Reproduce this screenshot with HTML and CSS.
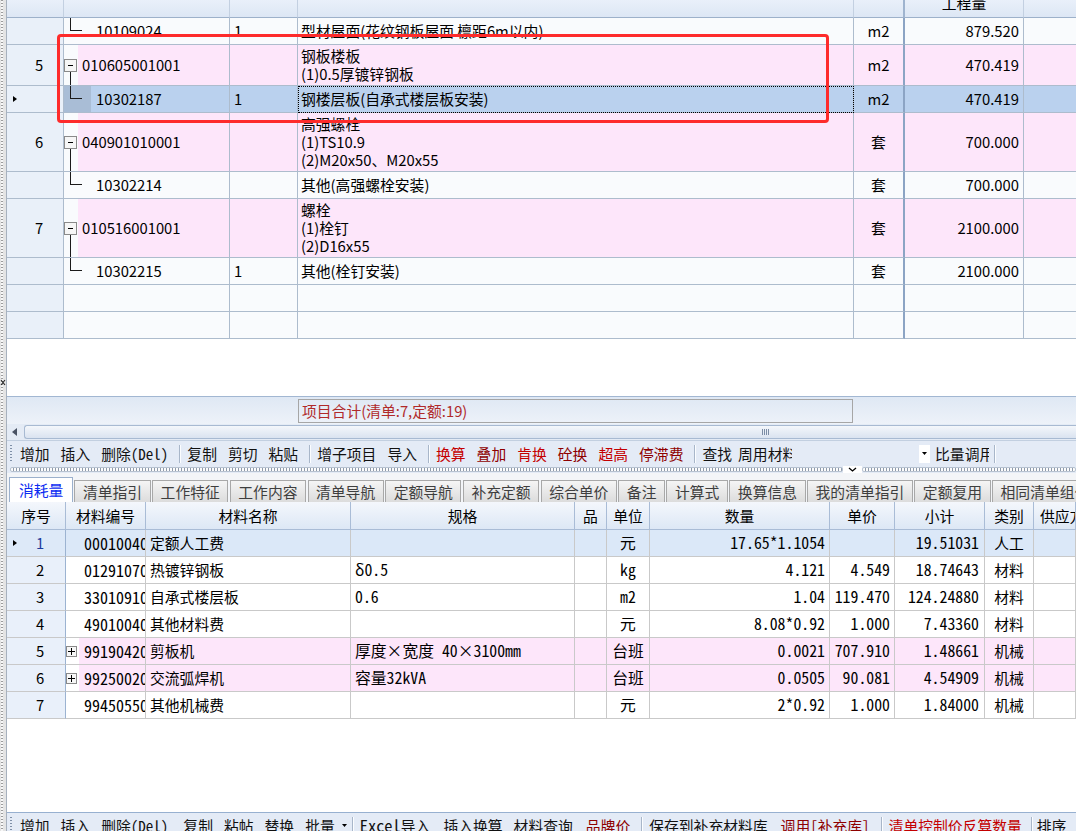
FILE: index.html
```html
<!DOCTYPE html>
<html lang="zh-CN">
<head>
<meta charset="utf-8">
<title>清单定额</title>
<link rel="stylesheet" href="styles.css">
</head>
<body>
<div class="app">
  <div class="strip">
    <svg class="strip-mark" width="6" height="7" viewBox="0 0 6 7"><path d="M1 1L5 6M5 1L1 6" stroke="#222" stroke-width="1.1"/></svg>
  </div>
  <div class="main">
    <section class="top">
      <div class="tr head">
        <div class="c"></div><div class="c"></div><div class="c"></div><div class="c"></div><div class="c cu"></div>
        <div class="c"><span class="head-txt">工程量</span></div><div class="c"></div>
      </div>

      <div class="tr">
        <div class="c rn"><span class="ind"></span><span class="num"></span></div>
        <div class="c code"><span class="tree"><i class="ell"></i></span><span class="ct">10109024</span></div>
        <div class="c q1">1</div>
        <div class="c nm"><span>型材屋面(花纹钢板屋面 檩距6m以内)</span></div>
        <div class="c un cu">m2</div>
        <div class="c qt">879.520</div>
        <div class="c"></div>
      </div>

      <div class="tr h41 pink">
        <div class="c rn"><span class="ind"></span><span class="num">5</span></div>
        <div class="c code parent"><span class="gut"><i class="sp"></i><svg width="13" height="13" viewBox="0 0 13 13"><rect x="0.5" y="0.5" width="12" height="12" fill="#f6f6f6" stroke="#8a8a8a"/><path d="M4 6.5H9" stroke="#000"/></svg><i class="dn"></i></span><span class="ct">010605001001</span></div>
        <div class="c q1"></div>
        <div class="c nm"><span>钢板楼板</span><span>(1)0.5厚镀锌钢板</span></div>
        <div class="c un cu">m2</div>
        <div class="c qt">470.419</div>
        <div class="c"></div>
      </div>

      <div class="tr sel">
        <div class="c rn"><span class="ind"><i class="tri"></i></span><span class="num"></span></div>
        <div class="c code"><span class="tree"><i class="ell"></i></span><span class="ct">10302187</span></div>
        <div class="c q1">1</div>
        <div class="c nm focus"><span>钢楼层板(自承式楼层板安装)</span></div>
        <div class="c un cu">m2</div>
        <div class="c qt">470.419</div>
        <div class="c"></div>
      </div>

      <div class="tr h59 pink">
        <div class="c rn"><span class="ind"></span><span class="num">6</span></div>
        <div class="c code parent"><span class="gut"><i class="sp"></i><svg width="13" height="13" viewBox="0 0 13 13"><rect x="0.5" y="0.5" width="12" height="12" fill="#f6f6f6" stroke="#8a8a8a"/><path d="M4 6.5H9" stroke="#000"/></svg><i class="dn"></i></span><span class="ct">040901010001</span></div>
        <div class="c q1"></div>
        <div class="c nm"><span>高强螺栓</span><span>(1)TS10.9</span><span>(2)M20x50、M20x55</span></div>
        <div class="c un cu">套</div>
        <div class="c qt">700.000</div>
        <div class="c"></div>
      </div>

      <div class="tr">
        <div class="c rn"><span class="ind"></span><span class="num"></span></div>
        <div class="c code"><span class="tree"><i class="ell"></i></span><span class="ct">10302214</span></div>
        <div class="c q1"></div>
        <div class="c nm"><span>其他(高强螺栓安装)</span></div>
        <div class="c un cu">套</div>
        <div class="c qt">700.000</div>
        <div class="c"></div>
      </div>

      <div class="tr h59 pink">
        <div class="c rn"><span class="ind"></span><span class="num">7</span></div>
        <div class="c code parent"><span class="gut"><i class="sp"></i><svg width="13" height="13" viewBox="0 0 13 13"><rect x="0.5" y="0.5" width="12" height="12" fill="#f6f6f6" stroke="#8a8a8a"/><path d="M4 6.5H9" stroke="#000"/></svg><i class="dn"></i></span><span class="ct">010516001001</span></div>
        <div class="c q1"></div>
        <div class="c nm"><span>螺栓</span><span>(1)栓钉</span><span>(2)D16x55</span></div>
        <div class="c un cu">套</div>
        <div class="c qt">2100.000</div>
        <div class="c"></div>
      </div>

      <div class="tr">
        <div class="c rn"><span class="ind"></span><span class="num"></span></div>
        <div class="c code"><span class="tree"><i class="ell"></i></span><span class="ct">10302215</span></div>
        <div class="c q1">1</div>
        <div class="c nm"><span>其他(栓钉安装)</span></div>
        <div class="c un cu">套</div>
        <div class="c qt">2100.000</div>
        <div class="c"></div>
      </div>

      <div class="tr">
        <div class="c rn"></div><div class="c"></div><div class="c"></div><div class="c"></div><div class="c cu"></div><div class="c"></div><div class="c"></div>
      </div>
      <div class="tr">
        <div class="c rn"></div><div class="c"></div><div class="c"></div><div class="c"></div><div class="c cu"></div><div class="c"></div><div class="c"></div>
      </div>
    </section>

    <div class="summary"><div class="sum-box">项目合计(清单:7,定额:19)</div></div>

    <div class="hscroll">
      <span class="harr"><svg width="5" height="8" viewBox="0 0 5 8"><path d="M5 0L0 4L5 8Z" fill="#4a5364"/></svg></span>
      <span class="thumb"><i class="grip-v"></i></span>
    </div>

    <div class="toolbar tb-top">
      <span class="grip"></span>
      <span class="it">增加</span>
      <span class="it">插入</span>
      <span class="it">删除<span class="mono">(Del)</span></span>
      <span class="sep"></span>
      <span class="it">复制</span>
      <span class="it">剪切</span>
      <span class="it">粘贴</span>
      <span class="sep"></span>
      <span class="it">增子项目</span>
      <span class="it">导入</span>
      <span class="sep"></span>
      <span class="it red">换算</span>
      <span class="it dred">叠加</span>
      <span class="it red">肯换</span>
      <span class="it dred">砼换</span>
      <span class="it red">超高</span>
      <span class="it dred">停滞费</span>
      <span class="sep"></span>
      <span class="it tight">查找</span>
      <span class="clip c1">周用材料</span>
      <span class="dd"><svg width="5" height="3" viewBox="0 0 5 3"><path d="M0 0H5L2.5 3Z" fill="#000"/></svg></span>
      <span class="clip c2">比量调用</span>
      <span class="sep"></span>
    </div>

    <div class="splitter">
      <span class="dots l"></span>
      <span class="chev"><svg width="9" height="5" viewBox="0 0 9 5"><path d="M1 1L4.5 4L8 1" fill="none" stroke="#000" stroke-width="1.3"/></svg></span>
      <span class="dots r"></span>
    </div>

    <div class="tabs">
      <span class="tab on">消耗量</span>
      <span class="tab">清单指引</span>
      <span class="tab">工作特征</span>
      <span class="tab">工作内容</span>
      <span class="tab">清单导航</span>
      <span class="tab">定额导航</span>
      <span class="tab">补充定额</span>
      <span class="tab">综合单价</span>
      <span class="tab">备注</span>
      <span class="tab">计算式</span>
      <span class="tab">换算信息</span>
      <span class="tab">我的清单指引</span>
      <span class="tab">定额复用</span>
      <span class="tab">相同清单组价</span>
    </div>

    <section class="bottom">
      <div class="br head">
        <div class="c">序号</div><div class="c">材料编号</div><div class="c">材料名称</div><div class="c">规格</div><div class="c">品</div><div class="c">单位</div><div class="c">数量</div><div class="c">单价</div><div class="c">小计</div><div class="c">类别</div><div class="c sup">供应方</div>
      </div>

      <div class="br cur">
        <div class="c rn"><span class="ind"><i class="tri"></i></span><span class="num">1</span></div>
        <div class="c code2"><span class="g2"></span><span class="ct2">00010040</span></div>
        <div class="c nm2">定额人工费</div>
        <div class="c gg m"></div>
        <div class="c"></div>
        <div class="c ctr m">元</div>
        <div class="c rt m">17.65*1.1054</div>
        <div class="c rt m"></div>
        <div class="c rt rt5 m">19.51031</div>
        <div class="c ctr">人工</div>
        <div class="c"></div>
      </div>

      <div class="br">
        <div class="c rn"><span class="ind"></span><span class="num">2</span></div>
        <div class="c code2"><span class="g2"></span><span class="ct2">01291070</span></div>
        <div class="c nm2">热镀锌钢板</div>
        <div class="c gg m">δ0.5</div>
        <div class="c"></div>
        <div class="c ctr m">kg</div>
        <div class="c rt m">4.121</div>
        <div class="c rt m">4.549</div>
        <div class="c rt rt5 m">18.74643</div>
        <div class="c ctr">材料</div>
        <div class="c"></div>
      </div>

      <div class="br">
        <div class="c rn"><span class="ind"></span><span class="num">3</span></div>
        <div class="c code2"><span class="g2"></span><span class="ct2">33010910</span></div>
        <div class="c nm2">自承式楼层板</div>
        <div class="c gg m">0.6</div>
        <div class="c"></div>
        <div class="c ctr m">m2</div>
        <div class="c rt m">1.04</div>
        <div class="c rt m">119.470</div>
        <div class="c rt rt5 m">124.24880</div>
        <div class="c ctr">材料</div>
        <div class="c"></div>
      </div>

      <div class="br">
        <div class="c rn"><span class="ind"></span><span class="num">4</span></div>
        <div class="c code2"><span class="g2"></span><span class="ct2">49010040</span></div>
        <div class="c nm2">其他材料费</div>
        <div class="c gg m"></div>
        <div class="c"></div>
        <div class="c ctr m">元</div>
        <div class="c rt m">8.08*0.92</div>
        <div class="c rt m">1.000</div>
        <div class="c rt rt5 m">7.43360</div>
        <div class="c ctr">材料</div>
        <div class="c"></div>
      </div>

      <div class="br pink">
        <div class="c rn"><span class="ind"></span><span class="num">5</span></div>
        <div class="c code2"><span class="g2"><svg width="11" height="11" viewBox="0 0 11 11"><rect x="0.5" y="0.5" width="10" height="10" fill="#f7f7f7" stroke="#8a8a8a"/><path d="M2 5.5H9M5.5 2V9" stroke="#000"/></svg></span><span class="ct2">99190420</span></div>
        <div class="c nm2">剪板机</div>
        <div class="c gg m">厚度×宽度 40×3100mm</div>
        <div class="c"></div>
        <div class="c ctr m">台班</div>
        <div class="c rt m">0.0021</div>
        <div class="c rt m">707.910</div>
        <div class="c rt rt5 m">1.48661</div>
        <div class="c ctr">机械</div>
        <div class="c"></div>
      </div>

      <div class="br pink">
        <div class="c rn"><span class="ind"></span><span class="num">6</span></div>
        <div class="c code2"><span class="g2"><svg width="11" height="11" viewBox="0 0 11 11"><rect x="0.5" y="0.5" width="10" height="10" fill="#f7f7f7" stroke="#8a8a8a"/><path d="M2 5.5H9M5.5 2V9" stroke="#000"/></svg></span><span class="ct2">99250020</span></div>
        <div class="c nm2">交流弧焊机</div>
        <div class="c gg m">容量32kVA</div>
        <div class="c"></div>
        <div class="c ctr m">台班</div>
        <div class="c rt m">0.0505</div>
        <div class="c rt m">90.081</div>
        <div class="c rt rt5 m">4.54909</div>
        <div class="c ctr">机械</div>
        <div class="c"></div>
      </div>

      <div class="br">
        <div class="c rn"><span class="ind"></span><span class="num">7</span></div>
        <div class="c code2"><span class="g2"></span><span class="ct2">99450550</span></div>
        <div class="c nm2">其他机械费</div>
        <div class="c gg m"></div>
        <div class="c"></div>
        <div class="c ctr m">元</div>
        <div class="c rt m">2*0.92</div>
        <div class="c rt m">1.000</div>
        <div class="c rt rt5 m">1.84000</div>
        <div class="c ctr">机械</div>
        <div class="c"></div>
      </div>
    </section>

    <div class="toolbar tb-bot">
      <span class="grip"></span>
      <span class="it">增加</span>
      <span class="it">插入</span>
      <span class="it g15">删除<span class="mono">(Del)</span></span>
      <span class="it">复制</span>
      <span class="it">粘帖</span>
      <span class="it">替换</span>
      <span class="it g7">批量</span>
      <span class="ddt"><svg width="5" height="3" viewBox="0 0 5 3"><path d="M0 0H5L2.5 3Z" fill="#000"/></svg></span>
      <span class="sep"></span>
      <span class="it g13"><span class="mono wide">Excel</span>导入</span>
      <span class="it">插入换算</span>
      <span class="it g13">材料查询</span>
      <span class="it dred">品牌价</span>
      <span class="sep"></span>
      <span class="it g13">保存到补充材料库</span>
      <span class="it dred">调用<span class="mono">[</span>补充库<span class="mono">]</span></span>
      <span class="sep"></span>
      <span class="it red g9">清单控制价反算数量</span>
      <span class="sep s5"></span>
      <span class="it">排序</span>
    </div>
  </div>
  <div class="annot"></div>
</div>
</body>
</html>
```

FILE: styles.css
```css
* { box-sizing: border-box; }
html, body { margin: 0; padding: 0; }
body {
  width: 1076px;
  height: 831px;
  overflow: hidden;
  background: #fff;
  font-family: "Noto Sans CJK SC", "Noto Sans", sans-serif;
  font-size: 14.8px;
  line-height: 18px;
  color: #000;
}
i { font-style: normal; }
.mono { font-family: "Noto Sans Mono CJK SC", "DejaVu Sans Mono", monospace; font-size: 15px; }
.mono.wide { font-size: 16.4px; }
.m { font-family: "Noto Sans Mono CJK SC", "DejaVu Sans Mono", monospace; font-size: 15.8px; }

.app { position: relative; display: flex; width: 1076px; height: 831px; overflow: hidden; }

.strip {
  flex: none;
  width: 7px;
  height: 831px;
  border-right: 1px solid #a7b1be;
  background-color: #e4e4e4;
  background-image: repeating-linear-gradient(180deg, #9c9c9c 0 1px, #f7f7f7 1px 3px);
  background-size: 2px 100%;
  background-repeat: no-repeat;
  background-position: 1px 0;
  padding-top: 379px;
}
.strip-mark { display: block; }

.main { flex: 1; min-width: 0; height: 831px; display: flex; flex-direction: column; overflow: hidden; }
.main > * { flex: none; }

/* ---------- top grid ---------- */
.top { height: 396px; background: #fff; overflow: hidden; }
.tr {
  display: grid;
  grid-template-columns: 57px 166px 68px 556px 51px 119px 1fr;
  height: 27px;
  background: #f9fbfd;
}
.tr > .c {
  display: flex;
  align-items: center;
  min-width: 0;
  overflow: hidden;
  white-space: nowrap;
  border-right: 1px solid #adbccd;
  border-bottom: 1px solid #adbccd;
}
.tr > .c:last-child { border-right: 0; }
.tr > .cu { border-right: 2px solid #8ca4c4; }
.tr.head { height: 18px; background: linear-gradient(#e9f0fa, #dce6f4); }
.tr.head > .c { border-right-color: #c3d0e1; border-bottom-color: #9db1ca; align-items: flex-start; justify-content: center; }
.tr.head > .cu { border-right: 2px solid #9fb4cf; }
.head-txt { margin-top: -6px; }
.tr.h41 { height: 41px; }
.tr.h59 { height: 59px; }
.tr.pink { background: #fde6fa; }
.tr.sel { background: #bad1ee; }
.tr > .rn { background: #e9f0f9; }

.ind { flex: none; width: 8px; align-self: stretch; display: flex; align-items: center; }
.num { flex: 1; text-align: center; }
.tri {
  display: block;
  margin-left: 6px;
  width: 0;
  height: 0;
  border-left: 4px solid #000;
  border-top: 3.5px solid transparent;
  border-bottom: 3.5px solid transparent;
}

.tree { flex: none; width: 27px; align-self: stretch; }
.tr.sel .tree { background: #a9bdd6; }
.ell {
  display: block;
  margin-left: 6px;
  width: 12px;
  height: 13px;
  border-left: 1px solid #1a1a1a;
  border-bottom: 1px solid #1a1a1a;
}
.ct { flex: 1; align-self: stretch; display: flex; align-items: center; padding-left: 5px; }
.parent .ct { padding-left: 4px; }
.gut { flex: none; width: 14px; align-self: stretch; display: flex; flex-direction: column; background: #f9fbfd; }
.gut .sp { flex: 1; }
.gut .dn { flex: 1; margin-left: 6px; border-left: 1px solid #1a1a1a; }
.gut svg { display: block; flex: none; }

.tr > .q1 { padding-left: 4px; }
.tr > .c.nm { flex-direction: column; align-items: flex-start; justify-content: center; padding-left: 3px; }
.tr > .c.nm > span { display: block; }
.tr > .c.un { justify-content: center; }
.tr > .c.qt { justify-content: flex-end; padding-right: 4px; }
.tr > .c.focus { outline: 1px dotted #000; outline-offset: -1px; }

/* ---------- summary + scroll ---------- */
.summary {
  height: 28px;
  border-top: 1px solid #a2b7d2;
  background: linear-gradient(#dfe8f4, #edf2f9);
  display: flex;
  align-items: center;
  padding-left: 291px;
}
.sum-box {
  width: 555px;
  height: 24px;
  border: 1px solid #a6a6a6;
  color: #b02a2a;
  padding-left: 3px;
  display: flex;
  align-items: center;
}
.hscroll { height: 16px; display: flex; align-items: center; background: #e4ebf5; }
.harr { flex: none; width: 17px; display: flex; align-items: center; padding-left: 5px; }
.harr svg { display: block; }
.thumb {
  flex: 1;
  height: 14px;
  border: 1px solid #a8bad2;
  border-right: 0;
  border-radius: 3px 0 0 3px;
  background: linear-gradient(#f4f7fb, #dae3f0);
  display: flex;
  align-items: center;
  padding-left: 737px;
}
.grip-v { display: block; width: 7px; height: 6px; background: repeating-linear-gradient(90deg, #7b8ca5 0 1px, transparent 1px 2px); }

/* ---------- toolbars ---------- */
.toolbar {
  height: 26px;
  display: flex;
  align-items: center;
  padding-left: 3px;
  white-space: nowrap;
  overflow: hidden;
  background: #e4ebf6;
  color: #111;
}
.tb-top { border-top: 1px solid #c2cfe0; }
.tb-bot { border-top: 1px solid #97b0d0; }
.grip { flex: none; width: 2px; height: 18px; margin-right: 8px; background: repeating-linear-gradient(180deg, #7f90a8 0 1px, transparent 1px 3px); }
.it { flex: none; margin-right: 11px; }
.it.tight { margin-right: 6px; }
.it.g15 { margin-right: 15px; }
.it.g13 { margin-right: 13px; }
.it.g9 { margin-right: 9px; }
.it.g7 { margin-right: 7px; }
.sep { flex: none; width: 1px; height: 18px; margin: 0 7px 0 0; background: #a8b6c9; box-shadow: 1px 0 0 #fbfdff; }
.sep.s5 { margin-right: 5px; }
.red { color: #c40000; }
.dred { color: #8e0000; }
.clip { flex: none; overflow: hidden; display: block; }
.clip.c1 { width: 54px; margin-right: 127px; }
.clip.c2 { width: 54px; margin-right: 5px; }
.dd { flex: none; width: 11px; height: 18px; background: #fff; display: flex; align-items: center; justify-content: center; margin-right: 5px; }
.dd svg, .ddt svg, .chev svg { display: block; }
.ddt { flex: none; margin-right: 5px; }

/* ---------- splitter + tabs ---------- */
.splitter { height: 7px; display: flex; align-items: center; padding-left: 3px; background: #e4ebf6; }
.dots {
  display: block;
  height: 5px;
  border: 1px solid #b7c2d0;
  border-radius: 2px;
  background: repeating-linear-gradient(90deg, #fdfdfd 0 2px, #8e9aab 2px 3px);
}
.dots.l { flex: none; width: 833px; }
.dots.r { flex: 1; }
.chev { flex: none; width: 19px; height: 7px; background: #fff; display: flex; align-items: center; justify-content: center; }

.tabs { height: 29px; display: flex; align-items: flex-end; padding-left: 2px; background: #f3f5f8; overflow: hidden; white-space: nowrap; }
.tab {
  flex: none;
  height: 22px;
  padding: 0 7.5px;
  margin-right: 1.5px;
  border: 1px solid #a8a8a8;
  border-bottom: 0;
  background: linear-gradient(#f5f5f5, #dcdcdc);
  color: #3e3e3e;
  display: flex;
  align-items: center;
}
.tab.on { height: 25px; padding: 0 9px; margin-right: 1px; background: #fff; color: #0b2cf2; border-color: #9bb0cc; }

/* ---------- bottom grid ---------- */
.bottom { height: 310px; background: #fff; overflow: hidden; }
.br {
  display: grid;
  grid-template-columns: 59px 80px 205px 224px 32px 43px 180px 65px 90px 49px 1fr;
  height: 27px;
  background: #fff;
}
.br > .c {
  display: flex;
  align-items: center;
  min-width: 0;
  overflow: hidden;
  white-space: nowrap;
  border-right: 1px solid #c9c9c9;
  border-bottom: 1px solid #c9c9c9;
}
.br.head { height: 28px; background: linear-gradient(#f4f7fc, #dce7f5); }
.br.head > .c { justify-content: center; border-right-color: #a9bcd6; border-bottom-color: #a9bcd6; }
.br.head > .sup { justify-content: flex-start; padding-left: 6px; }
.br.cur { background: #dbe8f8; }
.br.pink { background: #fde6fa; }
.br > .rn { background: #e9f0fa; border-right-color: #9cb3d1; }
.br.cur > .rn .num { color: #1d3c9c; }
.br.cur > .rn { background: #dde9f8; }
.code2 { padding: 0; }
.g2 { flex: none; width: 13px; align-self: stretch; display: flex; align-items: center; }
.g2 svg { display: block; }
.br.pink .g2 { background: #fff; }
.ct2 {
  flex: 1;
  min-width: 0;
  align-self: stretch;
  display: flex;
  align-items: center;
  padding-left: 5px;
  overflow: hidden;
  font-family: "Noto Sans Mono CJK SC", "DejaVu Sans Mono", monospace;
  font-size: 16px;
}
.br > .nm2 { padding-left: 4px; }
.br > .gg { padding-left: 4px; }
.br > .ctr { justify-content: center; }
.br > .rt { justify-content: flex-end; padding-right: 4px; }
.br > .rt5 { padding-right: 5px; }

/* ---------- annotation ---------- */
.annot {
  position: absolute;
  left: 57px;
  top: 34px;
  width: 772px;
  height: 89px;
  border: 3px solid #fe2b2b;
  border-radius: 4px;
  pointer-events: none;
}
```
